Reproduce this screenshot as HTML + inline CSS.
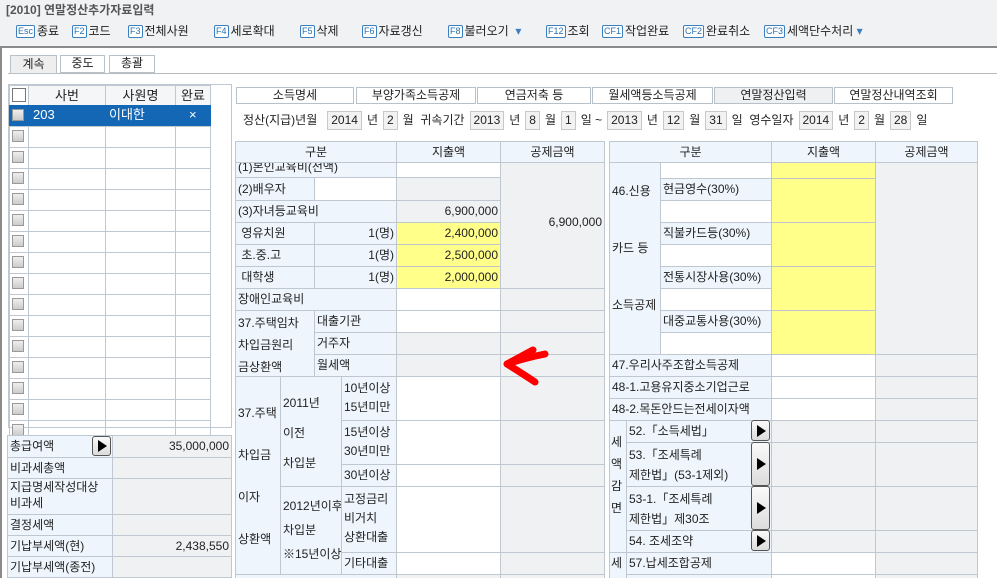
<!DOCTYPE html>
<html><head><meta charset="utf-8"><style>
*{margin:0;padding:0;box-sizing:border-box}
html,body{width:997px;height:578px;overflow:hidden}
body{background:#fff;font-family:"Liberation Sans","Noto Sans CJK KR",sans-serif;font-size:12px;color:#222;position:relative}
.a{position:absolute}
.c{position:absolute;border:1px solid #bfc7d0;white-space:nowrap;overflow:hidden;line-height:20px;padding:0 2px}
.l{background:#eef5fc}
.g{background:#eff1f3}
.w{background:#fff}
.y{background:#ffff8a}
.r{text-align:right}
.h{background:#eef5fc;text-align:center}
span.k{display:inline-block;border:1px solid #3a7fc0;color:#2a6fb0;font-size:9px;line-height:11px;padding:0 1px;margin-right:2px;border-radius:2px;background:#fff;vertical-align:1px}
.t{position:absolute;top:22px;white-space:nowrap;font-size:12px}
.tab{position:absolute;top:87px;height:17px;border:1px solid #b8c0c8;text-align:center;line-height:15px;background:#fff}
.bx{display:inline-block;border:1px solid #c8c8c8;background:#f2f2f2;padding:0 3px;line-height:17px;margin:0 5px}
.btn{position:absolute;border:1px solid #555;border-radius:3px;background:linear-gradient(#fafafa,#dcdcdc);width:19px}
.btn:after{content:"";position:absolute;left:5px;top:50%;margin-top:-6px;border-left:9px solid #000;border-top:6px solid transparent;border-bottom:6px solid transparent}
.ck{position:absolute;width:12px;height:12px;border:1px solid #999;background:linear-gradient(#eee,#ccc)}
</style></head><body>
<div class="a" style="left:0;top:0;width:997px;height:46px;background:#f0f2f3"></div>
<div class="a" style="left:0;top:46px;width:997px;height:2px;background:#8a8a8a"></div>
<div class="a" style="left:6px;top:1px;font-weight:bold;color:#555;font-size:12px">[2010] 연말정산추가자료입력</div>
<div class="t" style="left:16px"><span class="k">Esc</span>종료</div>
<div class="t" style="left:72px"><span class="k">F2</span>코드</div>
<div class="t" style="left:128px"><span class="k">F3</span>전체사원</div>
<div class="t" style="left:214px"><span class="k">F4</span>세로확대</div>
<div class="t" style="left:300px"><span class="k">F5</span>삭제</div>
<div class="t" style="left:362px"><span class="k">F6</span>자료갱신</div>
<div class="t" style="left:448px"><span class="k">F8</span>불러오기 &nbsp;<span style="color:#3a7fc0">▾</span></div>
<div class="t" style="left:546px"><span class="k">F12</span>조회</div>
<div class="t" style="left:602px"><span class="k">CF1</span>작업완료</div>
<div class="t" style="left:683px"><span class="k">CF2</span>완료취소</div>
<div class="t" style="left:764px"><span class="k">CF3</span>세액단수처리 <span style="color:#3a7fc0">▾</span></div>
<div class="a" style="left:0;top:48px;width:2px;height:530px;background:#8a8a8a"></div>
<div class="a" style="left:8px;top:73px;width:989px;height:1px;background:#bbb"></div>
<div class="tab" style="left:10px;top:55px;width:47px;height:19px;background:#eee;line-height:17px">계속</div>
<div class="tab" style="left:60px;top:55px;width:45px;height:18px">중도</div>
<div class="tab" style="left:109px;top:55px;width:46px;height:18px">총괄</div>
<!-- left grid -->
<div class="a" style="left:8px;top:84px;width:224px;height:344px;border:1px solid #bfc7d0"></div>
<div class="c h" style="left:9px;top:85px;width:20px;height:21px;background:#fff"></div>
<div class="a" style="left:12px;top:88px;width:14px;height:14px;border:1px solid #777;background:#fff"></div>
<div class="c h" style="left:28px;top:85px;width:78px;height:21px;background:#f4f6f8;font-size:13px">사번</div>
<div class="c h" style="left:105px;top:85px;width:71px;height:21px;background:#f4f6f8;font-size:13px">사원명</div>
<div class="c h" style="left:175px;top:85px;width:36px;height:21px;background:#f4f6f8;font-size:13px">완료</div>
<div class="a" style="left:9px;top:105px;width:202px;height:21px;background:#1467b5;color:#fff;line-height:20px;font-size:13px"><span class="a" style="left:24px">203</span><span class="a" style="left:100px">이대한</span><span class="a" style="left:180px">×</span></div>
<div class="ck" style="left:12px;top:109px"></div>
<div id="rows"></div>
<!-- bottom-left summary -->
<div class="c l" style="left:7px;top:435px;width:106px;height:23px">총급여액</div><div class="btn" style="left:92px;top:436px;height:20px"></div>
<div class="c g r" style="left:112px;top:435px;width:120px;height:23px">35,000,000</div>
<div class="c l" style="left:7px;top:457px;width:106px;height:22px">비과세총액</div><div class="c g" style="left:112px;top:457px;width:120px;height:22px"></div>
<div class="c l" style="left:7px;top:478px;width:106px;height:37px;line-height:16px;white-space:normal">지급명세작성대상<br>비과세</div><div class="c g" style="left:112px;top:478px;width:120px;height:37px"></div>
<div class="c l" style="left:7px;top:514px;width:106px;height:22px">결정세액</div><div class="c g" style="left:112px;top:514px;width:120px;height:22px"></div>
<div class="c l" style="left:7px;top:535px;width:106px;height:22px">기납부세액(현)</div><div class="c g r" style="left:112px;top:535px;width:120px;height:22px">2,438,550</div>
<div class="c l" style="left:7px;top:556px;width:106px;height:22px">기납부세액(종전)</div><div class="c g" style="left:112px;top:556px;width:120px;height:22px"></div>
<!-- right tabs -->
<div class="tab" style="left:236px;width:118px">소득명세</div>
<div class="tab" style="left:356px;width:120px">부양가족소득공제</div>
<div class="tab" style="left:477px;width:114px">연금저축 등</div>
<div class="tab" style="left:592px;width:121px">월세액등소득공제</div>
<div class="tab" style="left:714px;width:119px;background:#eef0f2">연말정산입력</div>
<div class="tab" style="left:834px;width:119px">연말정산내역조회</div>
<div class="a" style="left:243px;top:111px;white-space:nowrap;line-height:19px">정산(지급)년월<span class="bx" style="margin-left:10px">2014</span>년<span class="bx">2</span>월 &nbsp;귀속기간<span class="bx">2013</span>년<span class="bx">8</span>월<span class="bx">1</span>일 ~<span class="bx">2013</span>년<span class="bx">12</span>월<span class="bx">31</span>일 &nbsp;영수일자<span class="bx">2014</span>년<span class="bx">2</span>월<span class="bx">28</span>일</div>
<!-- left table -->
<div class="c h" style="left:235px;top:141px;width:162px;height:22px">구분</div>
<div class="c h" style="left:396px;top:141px;width:105px;height:22px">지출액</div>
<div class="c h" style="left:500px;top:141px;width:105px;height:22px">공제금액</div>
<div class="c l" style="left:235px;top:162px;width:162px;height:16px;line-height:8px">(1)본인교육비(전액)</div><div class="c w" style="left:396px;top:162px;width:105px;height:16px"></div>
<div class="c l" style="left:235px;top:177px;width:80px;height:24px;line-height:22px">(2)배우자</div><div class="c w" style="left:314px;top:177px;width:83px;height:24px"></div><div class="c g" style="left:396px;top:177px;width:105px;height:24px"></div>
<div class="c l" style="left:235px;top:200px;width:162px;height:23px">(3)자녀등교육비</div><div class="c g r" style="left:396px;top:200px;width:105px;height:23px">6,900,000</div>
<div class="c l" style="left:235px;top:222px;width:80px;height:23px">&nbsp;영유치원</div><div class="c l r" style="left:314px;top:222px;width:83px;height:23px">1(명)</div><div class="c y r" style="left:396px;top:222px;width:105px;height:23px">2,400,000</div>
<div class="c l" style="left:235px;top:244px;width:80px;height:23px">&nbsp;초.중.고</div><div class="c l r" style="left:314px;top:244px;width:83px;height:23px">1(명)</div><div class="c y r" style="left:396px;top:244px;width:105px;height:23px">2,500,000</div>
<div class="c l" style="left:235px;top:266px;width:80px;height:23px">&nbsp;대학생</div><div class="c l r" style="left:314px;top:266px;width:83px;height:23px">1(명)</div><div class="c y r" style="left:396px;top:266px;width:105px;height:23px">2,000,000</div>
<div class="c g r" style="left:500px;top:162px;width:105px;height:127px;line-height:118px">6,900,000</div>
<div class="c l" style="left:235px;top:288px;width:162px;height:23px">장애인교육비</div><div class="c w" style="left:396px;top:288px;width:105px;height:23px"></div><div class="c g" style="left:500px;top:288px;width:105px;height:23px"></div>
<div class="c l" style="left:235px;top:310px;width:80px;height:67px;line-height:22px;padding-top:1px">37.주택임차<br>차입금원리<br>금상환액</div>
<div class="c l" style="left:314px;top:310px;width:83px;height:23px">대출기관</div><div class="c w" style="left:396px;top:310px;width:105px;height:23px"></div><div class="c g" style="left:500px;top:310px;width:105px;height:23px"></div>
<div class="c l" style="left:314px;top:332px;width:83px;height:23px">거주자</div><div class="c g" style="left:396px;top:332px;width:105px;height:23px"></div><div class="c g" style="left:500px;top:332px;width:105px;height:23px"></div>
<div class="c l" style="left:314px;top:354px;width:83px;height:23px">월세액</div><div class="c g" style="left:396px;top:354px;width:105px;height:23px"></div><div class="c g" style="left:500px;top:354px;width:105px;height:23px"></div>
<div class="c l" style="left:235px;top:376px;width:46px;height:199px;line-height:42px;white-space:normal;padding-top:15px">37.주택<br>차입금<br>이자<br>상환액</div>
<div class="c l" style="left:280px;top:376px;width:62px;height:111px;line-height:30px;padding-top:11px">2011년<br>이전<br>차입분</div>
<div class="c l" style="left:280px;top:486px;width:62px;height:89px;line-height:24px;padding-top:7px">2012년이후<br>차입분<br>※15년이상</div>
<div class="c l" style="left:341px;top:376px;width:56px;height:45px;line-height:19px;padding-top:2px">10년이상<br>15년미만</div>
<div class="c l" style="left:341px;top:420px;width:56px;height:45px;line-height:19px;padding-top:2px">15년이상<br>30년미만</div>
<div class="c l" style="left:341px;top:464px;width:56px;height:23px">30년이상</div>
<div class="c l" style="left:341px;top:486px;width:56px;height:67px;line-height:19px;padding-top:3px">고정금리<br>비거치<br>상환대출</div>
<div class="c l" style="left:341px;top:552px;width:56px;height:23px">기타대출</div>
<div class="c w" style="left:396px;top:376px;width:105px;height:45px"></div><div class="c w" style="left:396px;top:420px;width:105px;height:45px"></div><div class="c w" style="left:396px;top:464px;width:105px;height:23px"></div><div class="c w" style="left:396px;top:486px;width:105px;height:67px"></div><div class="c w" style="left:396px;top:552px;width:105px;height:23px"></div>
<div class="c g" style="left:500px;top:376px;width:105px;height:45px"></div><div class="c g" style="left:500px;top:420px;width:105px;height:45px"></div><div class="c g" style="left:500px;top:464px;width:105px;height:23px"></div><div class="c g" style="left:500px;top:486px;width:105px;height:67px"></div><div class="c g" style="left:500px;top:552px;width:105px;height:23px"></div>
<div class="c l" style="left:235px;top:574px;width:162px;height:10px"></div><div class="c g" style="left:396px;top:574px;width:105px;height:10px"></div><div class="c g" style="left:500px;top:574px;width:105px;height:10px"></div>
<!-- right table -->
<div class="c h" style="left:609px;top:141px;width:163px;height:22px">구분</div>
<div class="c h" style="left:771px;top:141px;width:105px;height:22px">지출액</div>
<div class="c h" style="left:875px;top:141px;width:103px;height:22px">공제금액</div>
<div class="c l" style="left:609px;top:162px;width:52px;height:193px;line-height:57px;padding-top:0">46.신용<br>카드 등<br>소득공제</div>
<div class="c w" style="left:660px;top:162px;width:112px;height:17px"></div>
<div class="c l" style="left:660px;top:178px;width:112px;height:23px">현금영수(30%)</div>
<div class="c w" style="left:660px;top:200px;width:112px;height:23px"></div>
<div class="c l" style="left:660px;top:222px;width:112px;height:23px">직불카드등(30%)</div>
<div class="c w" style="left:660px;top:244px;width:112px;height:23px"></div>
<div class="c l" style="left:660px;top:266px;width:112px;height:23px">전통시장사용(30%)</div>
<div class="c w" style="left:660px;top:288px;width:112px;height:23px"></div>
<div class="c l" style="left:660px;top:310px;width:112px;height:23px">대중교통사용(30%)</div>
<div class="c w" style="left:660px;top:332px;width:112px;height:23px"></div>
<div class="c y" style="left:771px;top:162px;width:105px;height:17px"></div><div class="c y" style="left:771px;top:178px;width:105px;height:45px"></div><div class="c y" style="left:771px;top:222px;width:105px;height:45px"></div><div class="c y" style="left:771px;top:266px;width:105px;height:45px"></div><div class="c y" style="left:771px;top:310px;width:105px;height:45px"></div>
<div class="c g" style="left:875px;top:162px;width:103px;height:193px"></div>
<div class="c l" style="left:609px;top:354px;width:163px;height:23px">47.우리사주조합소득공제</div><div class="c w" style="left:771px;top:354px;width:105px;height:23px"></div><div class="c g" style="left:875px;top:354px;width:103px;height:23px"></div>
<div class="c l" style="left:609px;top:376px;width:163px;height:23px">48-1.고용유지중소기업근로</div><div class="c w" style="left:771px;top:376px;width:105px;height:23px"></div><div class="c g" style="left:875px;top:376px;width:103px;height:23px"></div>
<div class="c l" style="left:609px;top:398px;width:163px;height:23px">48-2.목돈안드는전세이자액</div><div class="c w" style="left:771px;top:398px;width:105px;height:23px"></div><div class="c g" style="left:875px;top:398px;width:103px;height:23px"></div>
<div class="c l" style="left:609px;top:420px;width:18px;height:133px;line-height:22px;padding:10px 0 0 1px;white-space:normal">세<br>액<br>감<br>면</div>
<div class="c l" style="left:626px;top:420px;width:146px;height:23px">52.「소득세법」</div>
<div class="c l" style="left:626px;top:442px;width:146px;height:45px;line-height:20px;padding-top:2px">53.「조세특례<br>제한법」(53-1제외)</div>
<div class="c l" style="left:626px;top:486px;width:146px;height:45px;line-height:20px;padding-top:2px">53-1.「조세특례<br>제한법」제30조</div>
<div class="c l" style="left:626px;top:530px;width:146px;height:23px">54. 조세조약</div>
<div class="btn" style="left:751px;top:420px;height:21px"></div><div class="btn" style="left:751px;top:442px;height:44px"></div><div class="btn" style="left:751px;top:486px;height:44px"></div><div class="btn" style="left:751px;top:530px;height:21px"></div>
<div class="c g" style="left:771px;top:420px;width:105px;height:23px"></div><div class="c g" style="left:771px;top:442px;width:105px;height:45px"></div><div class="c g" style="left:771px;top:486px;width:105px;height:45px"></div><div class="c g" style="left:771px;top:530px;width:105px;height:23px"></div>
<div class="c g" style="left:875px;top:420px;width:103px;height:23px"></div><div class="c g" style="left:875px;top:442px;width:103px;height:45px"></div><div class="c g" style="left:875px;top:486px;width:103px;height:45px"></div><div class="c g" style="left:875px;top:530px;width:103px;height:23px"></div>
<div class="c l" style="left:609px;top:552px;width:18px;height:40px;padding:0 0 0 1px">세</div>
<div class="c l" style="left:626px;top:552px;width:146px;height:23px">57.납세조합공제</div><div class="c w" style="left:771px;top:552px;width:105px;height:23px"></div><div class="c g" style="left:875px;top:552px;width:103px;height:23px"></div>
<div class="c l" style="left:626px;top:574px;width:146px;height:10px"></div><div class="c w" style="left:771px;top:574px;width:105px;height:10px"></div><div class="c g" style="left:875px;top:574px;width:103px;height:10px"></div>
<!-- red arrow -->
<svg class="a" style="left:495px;top:340px" width="60" height="50"><path d="M38 10 L12 24 M12 24 Q25 32 40 42 M12 24 Q30 18 50 14" stroke="#f00" stroke-width="7" fill="none" stroke-linecap="round"/></svg>
<script>
var h='';for(var i=0;i<15;i++){var t=126+i*21;h+='<div class="c" style="left:9px;top:'+t+'px;width:20px;height:22px"></div><div class="c" style="left:28px;top:'+t+'px;width:78px;height:22px"></div><div class="c" style="left:105px;top:'+t+'px;width:71px;height:22px"></div><div class="c" style="left:175px;top:'+t+'px;width:36px;height:22px"></div><div class="ck" style="left:12px;top:'+(t+4)+'px"></div>';}
document.getElementById('rows').innerHTML=h;
</script>
</body></html>
